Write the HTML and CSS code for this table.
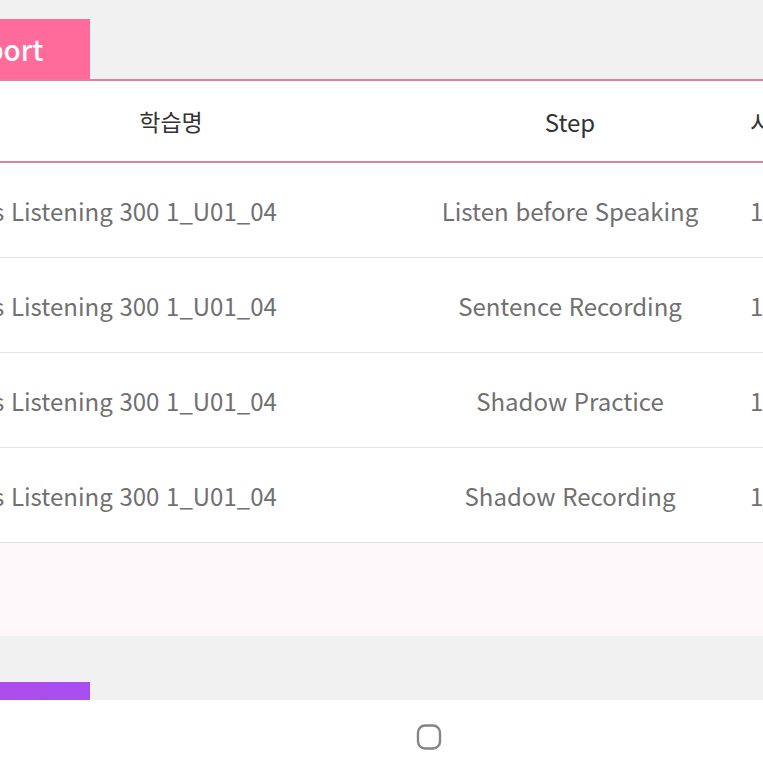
FILE: index.html
```html
<!DOCTYPE html>
<html lang="ko">
<head>
<meta charset="utf-8">
<link rel="stylesheet" href="styles.css">
</head>
<body>
<div class="page">
  <section class="report">
    <div class="tab tab-pink">Report</div>
    <div class="table">
      <div class="row head">
        <div class="c1">학습명</div>
        <div class="c2">Step</div>
        <div class="c3">시간</div>
      </div>
      <div class="row">
        <div class="c1 name">Kids Listening 300 1_U01_04</div>
        <div class="c2">Listen before Speaking</div>
        <div class="c3">1분 20초</div>
      </div>
      <div class="row">
        <div class="c1 name">Kids Listening 300 1_U01_04</div>
        <div class="c2">Sentence Recording</div>
        <div class="c3">1분 05초</div>
      </div>
      <div class="row">
        <div class="c1 name">Kids Listening 300 1_U01_04</div>
        <div class="c2">Shadow Practice</div>
        <div class="c3">1분 42초</div>
      </div>
      <div class="row">
        <div class="c1 name">Kids Listening 300 1_U01_04</div>
        <div class="c2">Shadow Recording</div>
        <div class="c3">1분 30초</div>
      </div>
      <div class="foot"></div>
    </div>
  </section>
  <section class="report next">
    <div class="tab tab-purple">Report</div>
  </section>
</div>
<nav class="navbar">
  <svg width="26" height="26" viewBox="0 0 26 26"><rect x="2" y="1.5" width="22" height="23" rx="7" fill="none" stroke="#858585" stroke-width="2.4"/></svg>
</nav>
</body>
</html>
```
FILE: styles.css
```css
html, body {
  margin: 0;
  padding: 0;
  background: #f1f1f1;
  overflow: hidden;
  height: 763px;
}
body {
  font-family: "Noto Sans CJK KR", "Noto Sans", sans-serif;
}
.page {
  margin-left: -68px;
  width: 1000px;
  padding-top: 19px;
}
.tab {
  width: 158px;
  height: 60px;
  box-sizing: border-box;
  padding-left: 20px;
  color: #fff;
  font-size: 28px;
  line-height: 60px;
  font-weight: 500;
}
.tab-pink {
  background: #ff6b9b;
}
.tab-purple {
  background: linear-gradient(90deg, #b24be8, #a84ef0);
  height: 19px;
  overflow: hidden;
}
.table {
  border-top: 2px solid #e4809f;
  background: #fff;
}
.row {
  display: grid;
  grid-template-columns: 478px 320px 202px;
  height: 94px;
  align-items: center;
  border-bottom: 1px solid #e4e4e4;
  font-size: 24px;
  color: #707070;
}
.row.head {
  height: 80px;
  border-bottom: 2px solid #e4809f;
  color: #333;
}
.row.head .c1 {
  font-size: 23px;
}
.c1, .c2 {
  text-align: center;
}
.c1.name {
  text-align: left;
  padding-left: 24px;
}
.c3 {
  padding-left: 20px;
}
.foot {
  height: 93px;
  background: #fdf7f9;
}
.next {
  margin-top: 46px;
}
.navbar {
  position: fixed;
  left: 0;
  right: 0;
  bottom: 0;
  height: 63px;
  background: #fff;
  display: flex;
  align-items: center;
  justify-content: center;
  padding-left: 94px;
  padding-top: 10px;
  box-sizing: border-box;
}
```
